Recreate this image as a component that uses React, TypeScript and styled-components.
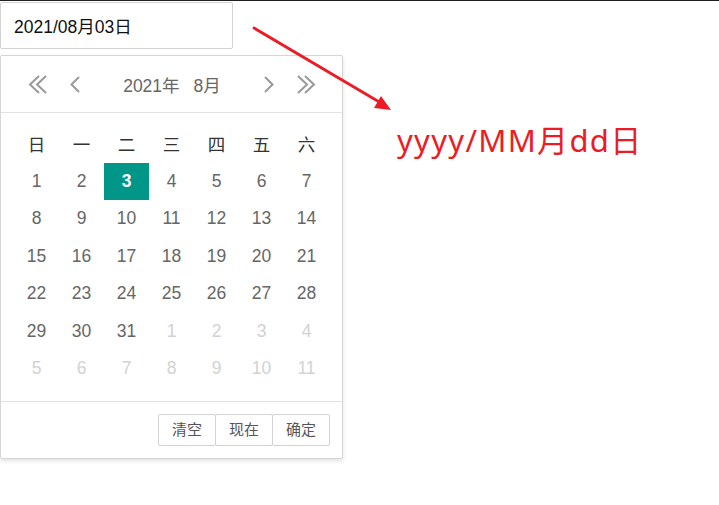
import React from "react";
import styled, { createGlobalStyle } from "styled-components";

const GlobalStyle = createGlobalStyle`
  html, body { margin: 0; padding: 0; background: #fff; }
  body { font-family: "Liberation Sans", "Noto Sans CJK SC", sans-serif; }
  * { box-sizing: border-box; }
`;

const Page = styled.div`
  width: 719px;
  min-height: 505px;
  display: flex;
  flex-direction: column;
`;

const TopRule = styled.div`
  height: 1px;
  background: #1f1f1f;
`;

const Stage = styled.div`
  position: relative;
  display: flex;
  align-items: flex-start;
`;

const LeftColumn = styled.div`
  display: flex;
  flex-direction: column;
  padding-top: 1px;
`;

const DateInput = styled.input`
  width: 233px;
  height: 47px;
  border: 1px solid #d2d2d2;
  border-radius: 2px;
  padding: 0 0 0 13px;
  font-family: "Liberation Sans", "Noto Sans CJK SC", sans-serif;
  font-size: 17.5px;
  color: #111;
  background: #fff;
  outline: none;
  margin-bottom: 6px;
`;

const Picker = styled.div`
  width: 343px;
  height: 404px;
  border: 1px solid #d6d6d6;
  border-radius: 2px;
  box-shadow: 0 2px 4px rgba(0, 0, 0, 0.12);
  background: #fff;
  display: flex;
  flex-direction: column;
`;

const Header = styled.div`
  height: 57px;
  border-bottom: 1px solid #e2e2e2;
  display: flex;
  align-items: center;
  padding: 0 26px 0 27px;
  gap: 22px;
`;

const NavIcon = styled.svg`
  display: block;
  flex: none;
  color: #999;
`;

const Title = styled.div`
  flex: 1;
  text-align: center;
  font-size: 17.5px;
  color: #666;
  display: flex;
  justify-content: center;
  gap: 14px;
  padding-top: 1px;
`;

const Days = styled.div`
  height: 289px;
  display: grid;
  grid-template-columns: repeat(7, 45px);
  grid-auto-rows: 37.5px;
  padding: 12px 12px 0 13px;
  border-bottom: 1px solid #e2e2e2;
`;

const WeekCell = styled.div`
  display: flex;
  align-items: center;
  justify-content: center;
  font-size: 17.5px;
  color: #333;
`;

const DayCell = styled.div<{ $muted?: boolean; $selected?: boolean }>`
  display: flex;
  align-items: center;
  justify-content: center;
  font-size: 17.5px;
  color: ${(p) => (p.$selected ? "#fff" : p.$muted ? "#d2d2d2" : "#666")};
  background: ${(p) => (p.$selected ? "#009688" : "transparent")};
  font-weight: ${(p) => (p.$selected ? 700 : 400)};
`;

const Footer = styled.div`
  flex: 1;
  display: flex;
  justify-content: flex-end;
  align-items: flex-start;
  padding: 12px 12px 0 0;
`;

const FootButton = styled.span`
  height: 32px;
  line-height: 30px;
  padding: 0 13px;
  border: 1px solid #d2d2d2;
  border-radius: 2px;
  margin-left: -1px;
  font-size: 15px;
  color: #555;
  background: #fff;
`;

const Label = styled.div`
  margin-left: 54px;
  padding-top: 119px;
  font-family: "Noto Sans", "Noto Sans CJK SC", sans-serif;
  font-size: 31px;
  line-height: 40px;
  letter-spacing: 1.3px;
  color: #ed1c24;
  white-space: nowrap;
`;

const ArrowLayer = styled.svg`
  position: absolute;
  left: 250px;
  top: 23px;
  pointer-events: none;
`;

const DoubleLeft = () => (
  <NavIcon width="20" height="19" viewBox="0 0 20 19">
    <polyline points="11,1 2,9.5 11,18" fill="none" stroke="currentColor" strokeWidth="2" />
    <polyline points="18,1 9,9.5 18,18" fill="none" stroke="currentColor" strokeWidth="2" />
  </NavIcon>
);
const DoubleRight = () => (
  <NavIcon width="20" height="19" viewBox="0 0 20 19">
    <polyline points="2,1 11,9.5 2,18" fill="none" stroke="currentColor" strokeWidth="2" />
    <polyline points="9,1 18,9.5 9,18" fill="none" stroke="currentColor" strokeWidth="2" />
  </NavIcon>
);
const SingleLeft = () => (
  <NavIcon width="10" height="17" viewBox="0 0 10 17">
    <polyline points="9,1 1.5,8.5 9,16" fill="none" stroke="currentColor" strokeWidth="2" />
  </NavIcon>
);
const SingleRight = () => (
  <NavIcon width="10" height="17" viewBox="0 0 10 17">
    <polyline points="1,1 8.5,8.5 1,16" fill="none" stroke="currentColor" strokeWidth="2" />
  </NavIcon>
);

const weekdays = ["日", "一", "二", "三", "四", "五", "六"];

type Day = { n: number; muted?: boolean; selected?: boolean };
const days: Day[] = [];
for (let i = 1; i <= 31; i++) days.push({ n: i, selected: i === 3 });
for (let i = 1; i <= 11; i++) days.push({ n: i, muted: true });

export default function App() {
  return (
    <Page>
      <GlobalStyle />
      <TopRule />
      <Stage>
        <LeftColumn>
          <DateInput readOnly value="2021/08月03日" />
          <Picker>
            <Header>
              <DoubleLeft />
              <SingleLeft />
              <Title>
                <span>2021年</span>
                <span>8月</span>
              </Title>
              <SingleRight />
              <DoubleRight />
            </Header>
            <Days>
              {weekdays.map((w) => (
                <WeekCell key={w}>{w}</WeekCell>
              ))}
              {days.map((d, i) => (
                <DayCell key={i} $muted={d.muted} $selected={d.selected}>
                  {d.n}
                </DayCell>
              ))}
            </Days>
            <Footer>
              <FootButton>清空</FootButton>
              <FootButton>现在</FootButton>
              <FootButton>确定</FootButton>
            </Footer>
          </Picker>
        </LeftColumn>
        <Label>yyyy/MM月dd日</Label>
        <ArrowLayer width="150" height="95" viewBox="0 0 150 95">
          <line x1="4" y1="4" x2="131" y2="79" stroke="#ed1c24" strokeWidth="2.8" strokeLinecap="round" />
          <polygon points="141,86 124,84 131,72" fill="#ed1c24" />
        </ArrowLayer>
      </Stage>
    </Page>
  );
}
